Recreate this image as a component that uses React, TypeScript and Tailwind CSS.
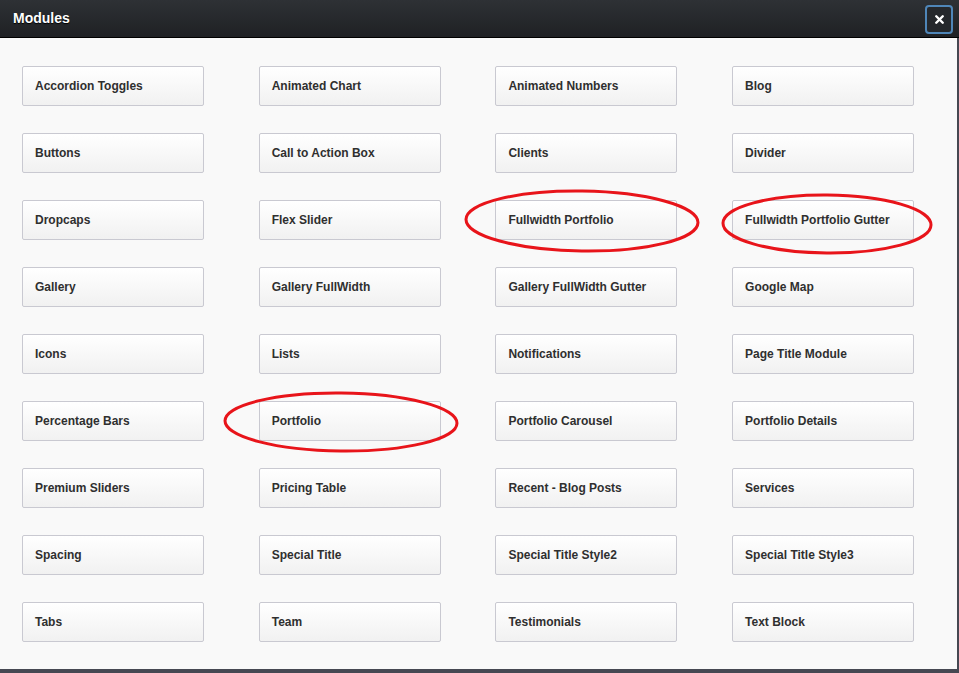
import { X } from 'lucide-react';

const modules = [
  'Accordion Toggles', 'Animated Chart', 'Animated Numbers', 'Blog',
  'Buttons', 'Call to Action Box', 'Clients', 'Divider',
  'Dropcaps', 'Flex Slider', 'Fullwidth Portfolio', 'Fullwidth Portfolio Gutter',
  'Gallery', 'Gallery FullWidth', 'Gallery FullWidth Gutter', 'Google Map',
  'Icons', 'Lists', 'Notifications', 'Page Title Module',
  'Percentage Bars', 'Portfolio', 'Portfolio Carousel', 'Portfolio Details',
  'Premium Sliders', 'Pricing Table', 'Recent - Blog Posts', 'Services',
  'Spacing', 'Special Title', 'Special Title Style2', 'Special Title Style3',
  'Tabs', 'Team', 'Testimonials', 'Text Block',
];

// hand-drawn highlight rings over the dialog
function Highlights() {
  return (
    <svg className="absolute inset-0 pointer-events-none" width="959" height="673">
      <g fill="none" stroke="#e8141a" strokeWidth="3">
        <ellipse cx="582" cy="221" rx="116" ry="30" transform="rotate(0.8 582 221)" />
        <ellipse cx="827" cy="224" rx="104" ry="29" transform="rotate(0.5 827 224)" />
        <ellipse cx="341" cy="422" rx="116" ry="29" transform="rotate(0.6 341 422)" />
      </g>
    </svg>
  );
}

export default function App() {
  return (
    <div className="relative w-[959px] h-[673px] bg-[#464852] overflow-hidden font-['Liberation_Sans',Arial,sans-serif]">
      <div className="w-[957px] h-[669px] bg-[#f9f9f9] flex flex-col">
        <div className="h-[38px] w-[959px] flex items-center justify-between pl-[13px] pr-[6px] bg-gradient-to-b from-[#2e3135] to-[#1f2124] border-b border-black">
          <h1 className="text-white font-bold text-[14px] [text-shadow:0_1px_1px_#000]">Modules</h1>
          <button className="w-[28px] h-[29px] mt-[1px] rounded-[4px] border-2 border-[#4f86b8] bg-[#25282c] flex items-center justify-center">
            <X size={13} strokeWidth={4.5} className="text-white" />
          </button>
        </div>
        <div className="grid grid-cols-[repeat(4,182px)] gap-x-[54.7px] gap-y-[27px] pl-[22px] pt-[28px]">
          {modules.map((m) => (
            <div
              key={m}
              className="h-[40px] flex items-center pl-[12px] border border-[#c9c9d1] rounded-[2px] bg-gradient-to-b from-white to-[#f1f1f1] text-[12px] font-bold text-[#2f2f2f]"
            >
              {m}
            </div>
          ))}
        </div>
      </div>
      <Highlights />
    </div>
  );
}
